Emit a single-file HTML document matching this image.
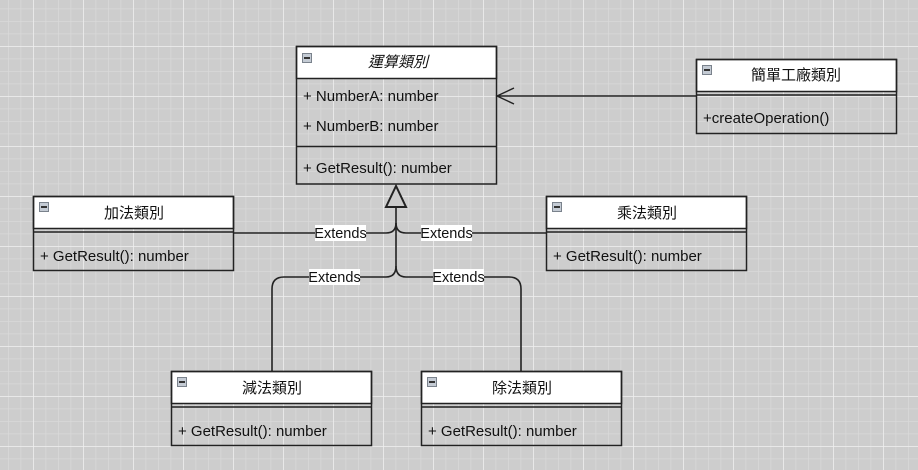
<!DOCTYPE html>
<html><head><meta charset="utf-8"><style>
html,body{margin:0;padding:0;width:918px;height:470px;overflow:hidden;background:#cdcdcd}
svg{display:block}
text{font-family:"Liberation Sans","Noto Sans CJK TC",sans-serif;font-size:15px;fill:#111}
.t{text-anchor:middle}
.e{font-size:14.5px}
</style></head><body>
<svg width="918" height="470" xmlns="http://www.w3.org/2000/svg">
<defs>
<pattern id="minor" x="8" y="8.5" width="12.5" height="12.5" patternUnits="userSpaceOnUse">
<path d="M0 0H12.5M0 0V12.5" stroke="#d9d9d9" stroke-width="1.5" fill="none"/>
</pattern>
<pattern id="major" x="33" y="46" width="50" height="50" patternUnits="userSpaceOnUse">
<path d="M0 0H50M0 0V50" stroke="#efefef" stroke-width="1.5" fill="none"/>
</pattern>
<g id="ic"><rect x="0.5" y="0.5" width="9" height="9" fill="#c4cbd4" stroke="#7a828c"/><rect x="2" y="4" width="6" height="2" fill="#333"/></g>
</defs>
<rect width="918" height="470" fill="#cdcdcd"/>
<rect width="918" height="470" fill="url(#minor)"/>
<rect width="918" height="470" fill="url(#major)"/>

<g stroke="#222" stroke-width="1.6" fill="none">
<path d="M396 207V266"/>
<path d="M233 233H386Q396 233 396 223"/>
<path d="M546 233H406Q396 233 396 223"/>
<path d="M396 266Q396 277 386 277H284Q272 277 272 289V372"/>
<path d="M396 266Q396 277 406 277H509Q521 277 521 289V372"/>
<path d="M396 186L386 207H406Z" fill="#cdcdcd" stroke-width="2"/>
<path d="M696 96H497M514 88L497 96L514 104" stroke-width="1.4"/>
</g>
<g>
<rect x="315" y="225" width="51" height="16" fill="#fff"/><text x="340.5" y="238" class="t e">Extends</text>
<rect x="421" y="225" width="51" height="16" fill="#fff"/><text x="446.5" y="238" class="t e">Extends</text>
<rect x="309" y="269" width="51" height="16" fill="#fff"/><text x="334.5" y="282" class="t e">Extends</text>
<rect x="433" y="269" width="51" height="16" fill="#fff"/><text x="458.5" y="282" class="t e">Extends</text>
</g>

<g stroke="#222" stroke-width="1.5" fill="none">
<rect x="296.5" y="46.5" width="200" height="32" fill="#fff"/>
<rect x="296.5" y="46.5" width="200" height="137.5"/>
<path d="M296 146.5H497"/>
</g>
<use href="#ic" x="302" y="53"/>
<text x="398" y="67" class="t" style="font-style:italic">運算類別</text>
<text x="303" y="101">+ NumberA: number</text>
<text x="303" y="131">+ NumberB: number</text>
<text x="303" y="173">+ GetResult(): number</text>

<g stroke="#222" stroke-width="1.5" fill="none">
<rect x="696.5" y="59.5" width="200" height="32" fill="#fff"/>
<rect x="696.5" y="59.5" width="200" height="74"/>
<path d="M696 95H897"/>
</g>
<use href="#ic" x="702" y="65"/>
<text x="796" y="80" class="t">簡單工廠類別</text>
<text x="703" y="123">+createOperation()</text>

<g>
<g stroke="#222" stroke-width="1.5" fill="none">
<rect x="33.5" y="196.5" width="200" height="32" fill="#fff"/>
<rect x="33.5" y="196.5" width="200" height="74"/>
<path d="M33 232H234"/>
</g>
<use href="#ic" x="39" y="202"/>
<text x="134" y="218" class="t">加法類別</text>
<text x="40" y="261">+ GetResult(): number</text>
</g>
<g>
<g stroke="#222" stroke-width="1.5" fill="none">
<rect x="546.5" y="196.5" width="200" height="32" fill="#fff"/>
<rect x="546.5" y="196.5" width="200" height="74"/>
<path d="M546 232H747"/>
</g>
<use href="#ic" x="552" y="202"/>
<text x="647" y="218" class="t">乘法類別</text>
<text x="553" y="261">+ GetResult(): number</text>
</g>
<g>
<g stroke="#222" stroke-width="1.5" fill="none">
<rect x="171.5" y="371.5" width="200" height="32" fill="#fff"/>
<rect x="171.5" y="371.5" width="200" height="74"/>
<path d="M171 407H372"/>
</g>
<use href="#ic" x="177" y="377"/>
<text x="272" y="393" class="t">減法類別</text>
<text x="178" y="436">+ GetResult(): number</text>
</g>
<g>
<g stroke="#222" stroke-width="1.5" fill="none">
<rect x="421.5" y="371.5" width="200" height="32" fill="#fff"/>
<rect x="421.5" y="371.5" width="200" height="74"/>
<path d="M421 407H622"/>
</g>
<use href="#ic" x="427" y="377"/>
<text x="522" y="393" class="t">除法類別</text>
<text x="428" y="436">+ GetResult(): number</text>
</g>
</svg>
</body></html>
